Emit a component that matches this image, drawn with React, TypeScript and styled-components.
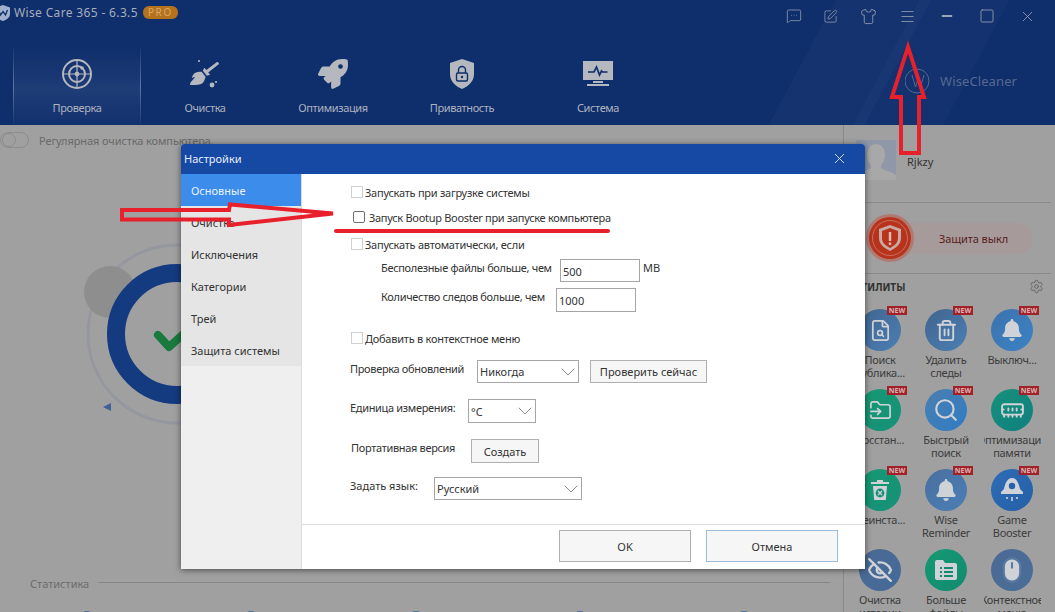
import React from 'react';
import styled, { createGlobalStyle } from 'styled-components';
import { FaBroom, FaRocket, FaBell } from 'react-icons/fa';
import {
  ChevronDown,
  EyeOff,
  FileSearch,
  MemoryStick,
  MessageSquareMore,
  Menu,
  Minus,
  Mouse,
  Search,
  Settings,
  Shirt,
  Square,
  SquarePen,
  Trash2,
  X,
  FolderInput,
} from 'lucide-react';

const GlobalStyle = createGlobalStyle`
  html, body { margin: 0; padding: 0; }
  body {
    width: 1055px;
    height: 612px;
    overflow: hidden;
    background: #a0a0a0;
    font-family: "Noto Sans", "Liberation Sans", sans-serif;
    font-size: 11px;
    color: #333;
  }
`;

const Page = styled.div`
  position: relative;
  width: 1055px;
  height: 612px;
  overflow: hidden;
  display: flex;
  flex-direction: column;
`;

/* ---------- шапка ---------- */

const Header = styled.header`
  flex: 0 0 125px;
  display: flex;
  flex-direction: column;
  background:
    linear-gradient(118deg, transparent 74.5%, rgba(255, 255, 255, 0.025) 74.5%, rgba(255, 255, 255, 0.025) 83%, transparent 83%),
    linear-gradient(118deg, transparent 82%, rgba(255, 255, 255, 0.02) 82%, rgba(255, 255, 255, 0.02) 90%, transparent 90%),
    #0e2e6c;
`;

const TitleBar = styled.div`
  flex: 0 0 47px;
  display: flex;
  align-items: flex-start;
  padding-top: 4px;
  box-sizing: border-box;
`;

const AppLogo = styled.svg`
  width: 14px;
  height: 16px;
  margin: 1px 1px 0 -4px;
  flex: none;
`;

const AppTitle = styled.span`
  font-size: 12px;
  line-height: 17px;
  letter-spacing: 0.35px;
  color: #a7adba;
  margin-left: 3px;
`;

const ProBadge = styled.span`
  width: 35px;
  height: 13px;
  margin: 2px 0 0 5px;
  border-radius: 6px;
  background: #b5721c;
  color: #d8a865;
  font-size: 10px;
  line-height: 13px;
  letter-spacing: 1.6px;
  text-align: center;
`;

const WindowTools = styled.div`
  margin-left: auto;
  margin-right: 8px;
  margin-top: 2px;
  display: flex;
  color: #a2a8b8;
`;

const ToolSlot = styled.div<{ $w: number }>`
  width: ${p => p.$w}px;
  height: 20px;
  display: flex;
  align-items: center;
  justify-content: center;
`;

const Tabs = styled.nav`
  flex: 1;
  display: flex;
  padding-left: 13px;
  position: relative;
`;

const Tab = styled.div<{ $w: number; $active?: boolean }>`
  width: ${p => p.$w}px;
  box-sizing: border-box;
  display: flex;
  flex-direction: column;
  align-items: center;
  color: #b5b8bf;
  padding-top: 12px;
  ${p =>
    p.$active &&
    `
    background: linear-gradient(180deg, rgba(255,255,255,0) 0%, rgba(255,255,255,0.07) 55%, rgba(255,255,255,0.01) 100%);
    border-left: 1px solid;
    border-right: 1px solid;
    border-image: linear-gradient(180deg, rgba(255,255,255,0.02), rgba(255,255,255,0.3) 50%, rgba(255,255,255,0.02)) 1;
  `}
`;

const TabIcon = styled.div`
  height: 30px;
  display: flex;
  align-items: center;
  justify-content: center;
`;

const TabLabel = styled.span`
  margin-top: 11px;
  font-size: 11px;
  line-height: 15px;
  letter-spacing: -0.4px;
  color: #aeb3bf;
`;

const Brand = styled.div`
  position: absolute;
  left: 905px;
  top: 21px;
  display: flex;
  align-items: center;
  gap: 9px;
  color: #56698f;
  font-size: 13px;
  letter-spacing: 0.1px;
`;

/* ---------- основная часть ---------- */

const Body = styled.div`
  flex: 1;
  display: flex;
  min-height: 0;
`;

const Main = styled.main`
  flex: 0 0 843px;
  display: flex;
  flex-direction: column;
`;

const ScheduleRow = styled.div`
  flex: none;
  height: 30px;
  display: flex;
  align-items: center;
  gap: 10px;
  color: #696969;
  font-size: 11px;
  letter-spacing: -0.1px;
`;

const Toggle = styled.div`
  width: 29px;
  height: 16px;
  box-sizing: border-box;
  border: 1px solid #8d8d8d;
  border-radius: 8px;
  display: flex;
  align-items: center;
  padding-left: 1px;
  &::before {
    content: '';
    width: 12px;
    height: 12px;
    border: 1px solid #8d8d8d;
    border-radius: 50%;
  }
`;

const Gauge = styled.svg`
  width: 200px;
  height: 192px;
  margin: 85px 0 0 77px;
  flex: none;
`;

const StatsHeader = styled.div`
  flex: none;
  margin-top: 144px;
  display: flex;
  align-items: center;
  gap: 9px;
  padding: 0 13px 0 30px;
  color: #6c6c6c;
  font-size: 11px;
  &::after {
    content: '';
    flex: 1;
    height: 1px;
    background: #878787;
    margin-top: -2px;
  }
`;

const StatsIcons = styled.div`
  flex: none;
  margin-top: 20px;
  display: flex;
  justify-content: space-between;
  padding: 0 95px 0 83px;
`;

const StatIcon = styled.div`
  width: 8px;
  height: 8px;
  border-radius: 3px 3px 0 0;
  background: #4b6fa0;
`;

const Side = styled.aside`
  flex: 1;
  border-left: 1px solid #8a8a8a;
  padding: 0 4px 0 0;
  display: flex;
  flex-direction: column;
`;

const UserBlock = styled.div`
  flex: none;
  height: 78px;
  box-sizing: border-box;
  display: flex;
  padding: 15px 0 0 12px;
  border-bottom: 1px solid #8a8a8a;
`;

const Avatar = styled.svg`
  width: 40px;
  height: 40px;
  flex: none;
`;

const UserName = styled.span`
  margin: 14px 0 0 11px;
  font-size: 11px;
  line-height: 15px;
  color: #333;
`;

const ProtectBlock = styled.div`
  flex: none;
  height: 71px;
  box-sizing: border-box;
  border-bottom: 1px solid #8a8a8a;
  display: flex;
  align-items: center;
  padding-left: 24px;
`;

const ProtectPill = styled.div`
  position: relative;
  width: 165px;
  height: 31px;
  border-radius: 16px;
  background: #a69b9a;
  color: #5a1c1c;
  font-size: 11px;
  letter-spacing: -0.1px;
  line-height: 31px;
  padding-left: 71px;
  box-sizing: border-box;
`;

const ProtectBadge = styled.svg`
  position: absolute;
  left: -2px;
  top: -9px;
  width: 48px;
  height: 48px;
`;

const UtilHead = styled.div`
  flex: none;
  height: 35px;
  display: flex;
  align-items: center;
  justify-content: space-between;
  padding: 0 7px 10px 11px;
  box-sizing: border-box;
  font-size: 10px;
  font-weight: 700;
  color: #333;
  text-transform: uppercase;
`;

const ToolGrid = styled.div`
  flex: none;
  display: grid;
  grid-template-columns: repeat(3, 66px);
  grid-auto-rows: 80px;
  padding-left: 3px;
`;

const ToolCell = styled.div`
  position: relative;
  display: flex;
  flex-direction: column;
  align-items: center;
`;

const ToolCircle = styled.div<{ $c1: string; $c2: string }>`
  width: 42px;
  height: 42px;
  border-radius: 50%;
  background: linear-gradient(135deg, ${p => p.$c1}, ${p => p.$c2});
  color: #cfd3d8;
  display: flex;
  align-items: center;
  justify-content: center;
  margin-bottom: 2px;
`;

const NewBadge = styled.span`
  position: absolute;
  left: 40px;
  top: -3px;
  width: 20px;
  height: 9px;
  background: #a12128;
  color: #d9b4b4;
  font-size: 7px;
  font-weight: 700;
  line-height: 9px;
  text-align: center;
`;

const ToolLine = styled.div`
  width: 57px;
  height: 13px;
  display: flex;
  justify-content: center;
  overflow: hidden;
  white-space: nowrap;
  font-size: 11px;
  letter-spacing: -0.3px;
  line-height: 13px;
  color: #3c3c3c;
`;

/* ---------- диалог настроек ---------- */

const Dialog = styled.section`
  position: absolute;
  left: 181px;
  top: 144px;
  width: 684px;
  height: 425px;
  display: flex;
  flex-direction: column;
  background: #fff;
  border-radius: 3px 3px 0 0;
  box-shadow: 0 1px 6px rgba(0, 0, 0, 0.55);
`;

const DialogTitle = styled.div`
  flex: 0 0 30px;
  box-sizing: border-box;
  display: flex;
  align-items: center;
  justify-content: space-between;
  padding: 0 17px 1px 3px;
  background: #1649a3;
  border-radius: 3px 3px 0 0;
  color: #e8eefa;
  font-size: 11px;
`;

const DialogBody = styled.div`
  flex: 1;
  display: flex;
  min-height: 0;
`;

const SideMenu = styled.ul`
  flex: 0 0 120px;
  margin: 0;
  padding: 0;
  list-style: none;
  background: #efefef;
  border-right: 1px solid #dcdcdc;
`;

const MenuItem = styled.li<{ $active?: boolean }>`
  height: 32px;
  box-sizing: border-box;
  padding-left: 10px;
  line-height: 33px;
  font-size: 11px;
  background: ${p => (p.$active ? '#3b8ceb' : '#e5e5e5')};
  color: ${p => (p.$active ? '#eaf3fd' : '#333')};
`;

const Pane = styled.div`
  flex: 1;
  display: flex;
  flex-direction: column;
  min-width: 0;
`;

const Form = styled.div`
  flex: 1;
  display: flex;
  flex-direction: column;
`;

const Row = styled.div<{ $top: number; $left: number; $h: number }>`
  flex: none;
  margin-top: ${p => p.$top}px;
  margin-left: ${p => p.$left}px;
  height: ${p => p.$h}px;
  display: flex;
  align-items: center;
  font-size: 11px;
  color: #333;
  white-space: nowrap;
`;

const CheckBox = styled.span<{ $focus?: boolean }>`
  width: 12px;
  height: 12px;
  box-sizing: border-box;
  flex: none;
  border: 1px solid ${p => (p.$focus ? '#6f6f6f' : '#d0d0d0')};
  border-radius: ${p => (p.$focus ? '2px' : '0')};
  margin-right: ${p => (p.$focus ? '4px' : '2px')};
`;

const CheckLabel = styled.span<{ $tight?: boolean }>`
  letter-spacing: ${p => (p.$tight ? '-0.3px' : '-0.25px')};
`;

const FieldLabel = styled.span<{ $w: number; $plain?: boolean }>`
  width: ${p => p.$w}px;
  flex: none;
  padding-bottom: 7px;
  letter-spacing: ${p => (p.$plain ? '0' : '-0.33px')};
`;

const NumberField = styled.div`
  width: 80px;
  height: 100%;
  box-sizing: border-box;
  border: 1px solid #a6a6a6;
  padding: 3px 0 0 2px;
  line-height: 18px;
`;

const Unit = styled.span`
  margin-left: 3px;
  padding-bottom: 7px;
`;

const Select = styled.div<{ $w: number }>`
  width: ${p => p.$w}px;
  height: 100%;
  box-sizing: border-box;
  border: 1px solid #a6a6a6;
  padding: 0 0 0 2px;
  display: flex;
  align-items: center;
  justify-content: space-between;
  color: #333;
`;

const Chevron = styled(ChevronDown)`
  color: #8b8b8b;
  flex: none;
  margin-right: -2px;
`;

const SmallButton = styled.button<{ $w: number }>`
  width: ${p => p.$w}px;
  height: 100%;
  margin-left: 11px;
  padding: 0;
  border: 1px solid #b0b0b0;
  background: #f6f6f6;
  font: inherit;
  color: #333;
`;

const BareButton = styled(SmallButton)`
  margin-left: 0;
`;

const Footer = styled.div`
  flex: 0 0 45px;
  box-sizing: border-box;
  border-top: 1px solid #dedede;
  display: flex;
  gap: 15px;
  padding: 5px 0 0 257px;
`;

const FooterButton = styled.button<{ $accent?: boolean }>`
  width: 132px;
  height: 32px;
  padding: 0;
  border: 1px solid ${p => (p.$accent ? '#9bbbdc' : '#b0b0b0')};
  background: #f6f6f6;
  font: inherit;
  font-size: 11px;
  color: #333;
`;

/* красные пометки поверх скриншота */
const Annotations = styled.svg`
  position: absolute;
  left: 0;
  top: 0;
  width: 1055px;
  height: 612px;
  pointer-events: none;
`;

const tools = [
  { lines: ['Поиск', 'дублика...'], c1: '#41648f', c2: '#4b7fb3', icon: <FileSearch size={23} strokeWidth={1.8} />, isNew: true },
  { lines: ['Удалить', 'следы'], c1: '#41648f', c2: '#4b7fb3', icon: <Trash2 size={23} strokeWidth={2} />, isNew: true },
  { lines: ['Выключ...'], c1: '#3d73ad', c2: '#3a82c4', icon: <FaBell size={22} />, isNew: true },
  { lines: ['Восстан...'], c1: '#169a72', c2: '#169078', icon: <FolderInput size={23} strokeWidth={1.8} />, isNew: true },
  { lines: ['Быстрый', 'поиск'], c1: '#4b7fb0', c2: '#2f7cc4', icon: <Search size={26} strokeWidth={2} />, isNew: true },
  { lines: ['Оптимизация', 'памяти'], c1: '#16917a', c2: '#0f7f80', icon: <MemoryStick size={25} strokeWidth={1.8} />, isNew: true },
  {
    lines: ['Деинста...'],
    c1: '#169a72',
    c2: '#169078',
    icon: (
      <svg width="22" height="24" viewBox="0 0 22 24">
        <path d="M8 2h6v2h6v2H2V4h6z" fill="currentColor" />
        <path d="M4 8h14l-1.2 14H5.2z" fill="currentColor" />
        <circle cx="11" cy="15" r="4.4" fill="#169078" />
        <path d="M9 13l4 4M13 13l-4 4" stroke="currentColor" strokeWidth="1.4" />
      </svg>
    ),
    isNew: true,
  },
  { lines: ['Wise', 'Reminder'], c1: '#4a6f9f', c2: '#4a7fb5', icon: <FaBell size={22} />, isNew: true },
  {
    lines: ['Game', 'Booster'],
    c1: '#2d6cb5',
    c2: '#2560a8',
    icon: (
      <svg width="26" height="26" viewBox="0 0 26 26">
        <path d="M13 1c5 0 7 6 8 11l3 3v2H2v-2l3-3c1-5 3-11 8-11z" fill="currentColor" />
        <circle cx="13" cy="9" r="3.2" fill="#2560a8" />
        <path d="M13 20v4M8 20v2M18 20v2" stroke="currentColor" strokeWidth="1.6" />
      </svg>
    ),
    isNew: true,
  },
  { lines: ['Очистка', 'истории'], c1: '#4a6a94', c2: '#456a98', icon: <EyeOff size={26} strokeWidth={2.2} /> },
  {
    lines: ['Больше', 'файлы'],
    c1: '#149a72',
    c2: '#138a70',
    icon: (
      <svg width="22" height="20" viewBox="0 0 22 20">
        <path d="M0 2a2 2 0 0 1 2-2h6l2 3h10a2 2 0 0 1 2 2v13a2 2 0 0 1-2 2H2a2 2 0 0 1-2-2z" fill="currentColor" />
        <path d="M5 8h2M9 8h9M5 12h2M9 12h9M5 16h2M9 16h9" stroke="#138a70" strokeWidth="1.8" />
      </svg>
    ),
  },
  { lines: ['Контекстное', 'меню'], c1: '#4a6a94', c2: '#4a6d98', icon: <Mouse size={28} strokeWidth={1.8} fill="#cfd3d8" stroke="#5a7aa2" /> },
];

const tabs = [
  {
    w: 128,
    label: 'Проверка',
    active: true,
    icon: (
      <svg width="32" height="32" viewBox="0 0 32 32" fill="none" stroke="currentColor">
        <circle cx="16" cy="16" r="14" strokeWidth="2" />
        <circle cx="16" cy="16" r="8" strokeWidth="2" />
        <path d="M16 2v28M2 16h28" strokeWidth="1.2" />
        <circle cx="16" cy="16" r="2" fill="currentColor" />
        <circle cx="21" cy="10" r="1.8" fill="currentColor" stroke="none" />
      </svg>
    ),
  },
  {
    w: 128,
    label: 'Очистка',
    icon: (
      <svg width="32" height="32" viewBox="0 0 32 32" fill="currentColor">
        <g transform="translate(1 1)">
          <FaBroom size={29} />
        </g>
        <circle cx="23" cy="27" r="2.4" />
        <circle cx="27" cy="24" r="1.1" />
        <circle cx="10" cy="3" r="1.1" />
      </svg>
    ),
  },
  { w: 128, label: 'Оптимизация', icon: <FaRocket size={30} /> },
  {
    w: 130,
    label: 'Приватность',
    icon: (
      <svg width="26" height="30" viewBox="0 0 26 30">
        <path d="M13 0l12 4v11c0 7-5 12-12 15C6 27 1 22 1 15V4z" fill="currentColor" />
        <rect x="7.5" y="14" width="11" height="8" rx="1.5" fill="none" stroke="#0e2e6c" strokeWidth="1.4" />
        <path d="M9.5 14v-3a3.5 3.5 0 0 1 7 0v3" fill="none" stroke="#0e2e6c" strokeWidth="1.4" />
        <circle cx="13" cy="18" r="1.2" fill="#0e2e6c" />
      </svg>
    ),
  },
  {
    w: 142,
    label: 'Система',
    icon: (
      <svg width="30" height="26" viewBox="0 0 30 26">
        <rect x="0" y="0" width="30" height="19" fill="currentColor" />
        <path d="M5 11h6l2.5-5 3 8 2-4 1 1h5" fill="none" stroke="#0e2e6c" strokeWidth="1.7" />
        <rect x="4" y="23" width="22" height="2" fill="currentColor" />
        <rect x="10" y="20" width="10" height="2" fill="currentColor" />
      </svg>
    ),
  },
];

const menu = ['Основные', 'Очистка', 'Исключения', 'Категории', 'Трей', 'Защита системы'];

export default function App() {
  return (
    <Page>
      <GlobalStyle />
      <Header>
        <TitleBar>
          <AppLogo viewBox="0 0 14 16">
            <path d="M7 0l7 2.5V9c0 3.5-3 5.5-7 7-4-1.5-7-3.5-7-7V2.5z" fill="#9fb1cc" />
            <path d="M2.5 5l2 5 2.5-3.500L9.500 10l2-5" fill="none" stroke="#0e2e6c" strokeWidth="1.3" />
          </AppLogo>
          <AppTitle>Wise Care 365 - 6.3.5</AppTitle>
          <ProBadge>PRO</ProBadge>
          <WindowTools>
            <ToolSlot $w={37}><MessageSquareMore size={16} strokeWidth={1.1} /></ToolSlot>
            <ToolSlot $w={37}><SquarePen size={15} strokeWidth={1.1} /></ToolSlot>
            <ToolSlot $w={38}><Shirt size={17} strokeWidth={1.1} /></ToolSlot>
            <ToolSlot $w={40}><Menu size={17} strokeWidth={1.1} /></ToolSlot>
            <ToolSlot $w={40}><Minus size={16} strokeWidth={2} color="#c9ccd3" /></ToolSlot>
            <ToolSlot $w={40}><Square size={16} strokeWidth={1.2} /></ToolSlot>
            <ToolSlot $w={40}><X size={17} strokeWidth={1.1} /></ToolSlot>
          </WindowTools>
        </TitleBar>
        <Tabs>
          {tabs.map(t => (
            <Tab key={t.label} $w={t.w} $active={t.active}>
              <TabIcon>{t.icon}</TabIcon>
              <TabLabel>{t.label}</TabLabel>
            </Tab>
          ))}
          <Brand>
            <svg width="26" height="26" viewBox="0 0 26 26" fill="none" stroke="#56698f" strokeWidth="1">
              <circle cx="12" cy="13" r="12" />
              <path d="M7 7l3.5 12L13 11l2.5 8L19 7" />
            </svg>
            WiseCleaner
          </Brand>
        </Tabs>
      </Header>

      <Body>
        <Main>
          <ScheduleRow>
            <Toggle />
            Регулярная очистка компьютера.
          </ScheduleRow>
          <Gauge viewBox="0 0 200 192">
            <circle cx="100" cy="94" r="89" fill="none" stroke="#95979f" strokeWidth="3" />
            <circle cx="33" cy="52" r="26" fill="#8e8e8e" />
            <circle cx="100" cy="94" r="61" fill="none" stroke="#143a80" strokeWidth="18" />
            <path d="M81 95l11 12 20-18" fill="none" stroke="#187a3c" strokeWidth="8" strokeLinecap="round" strokeLinejoin="round" />
            <path d="M26 167l8-4v8z" fill="#41609a" />
          </Gauge>
          <StatsHeader>Статистика</StatsHeader>
          <StatsIcons>
            {[0, 1, 2, 3, 4].map(i => (
              <StatIcon key={i} />
            ))}
          </StatsIcons>
        </Main>

        <Side>
          <UserBlock>
            <Avatar viewBox="0 0 40 40">
              <rect width="40" height="40" fill="#8f97a8" />
              <path d="M20 4c6 0 9 5 9 11 0 4-2 8-4 10v3c4 3 10 3 15 7v5H0v-5c5-4 11-4 15-7v-3c-2-2-4-6-4-10 0-6 3-11 9-11z" fill="#a8a8a8" />
            </Avatar>
            <UserName>Rjkzy</UserName>
          </UserBlock>
          <ProtectBlock>
            <ProtectPill>
              <ProtectBadge viewBox="0 0 48 48">
                <circle cx="24" cy="24" r="24" fill="#b07a72" />
                <circle cx="24" cy="24" r="21" fill="#b8331c" />
                <circle cx="24" cy="24" r="17.5" fill="none" stroke="#cf8a7c" strokeWidth="0.7" />
                <path d="M24 11l11 4v9c0 6-5 10-11 13-6-3-11-7-11-13v-9z" fill="#c9a9a1" />
                <path d="M24 14l8 3v7c0 5-3.500 7.500-8 10-4.500-2.500-8-5-8-10v-7z" fill="#b8331c" />
                <rect x="22.8" y="18" width="2.400" height="9" fill="#d9bdb6" />
                <rect x="22.800" y="28.500" width="2.400" height="2.400" fill="#d9bdb6" />
              </ProtectBadge>
              Защита выкл
            </ProtectPill>
          </ProtectBlock>
          <UtilHead>
            Утилиты
            <Settings size={15} strokeWidth={1.2} color="#555" />
          </UtilHead>
          <ToolGrid>
            {tools.map(t => (
              <ToolCell key={t.lines.join(' ')}>
                <ToolCircle $c1={t.c1} $c2={t.c2}>{t.icon}</ToolCircle>
                {t.isNew && <NewBadge>NEW</NewBadge>}
                {t.lines.map(l => (
                  <ToolLine key={l}>{l}</ToolLine>
                ))}
              </ToolCell>
            ))}
          </ToolGrid>
        </Side>
      </Body>

      <Dialog>
        <DialogTitle>
          Настройки
          <X size={17} strokeWidth={1.2} color="#e8eefa" />
        </DialogTitle>
        <DialogBody>
          <SideMenu>
            {menu.map((m, i) => (
              <MenuItem key={m} $active={i === 0}>{m}</MenuItem>
            ))}
          </SideMenu>
          <Pane>
            <Form>
              <Row $top={12} $left={49} $h={12}><CheckBox /><CheckLabel>Запускать при загрузке системы</CheckLabel></Row>
              <Row $top={13} $left={51} $h={12}><CheckBox $focus /><CheckLabel $tight>Запуск Bootup Booster при запуске компьютера</CheckLabel></Row>
              <Row $top={15} $left={49} $h={12}><CheckBox /><CheckLabel>Запускать автоматически, если</CheckLabel></Row>
              <Row $top={9} $left={79} $h={23}>
                <FieldLabel $w={179}>Бесполезные файлы больше, чем</FieldLabel>
                <NumberField>500</NumberField>
                <Unit>MB</Unit>
              </Row>
              <Row $top={6} $left={79} $h={24}>
                <FieldLabel $w={175}>Количество следов больше, чем</FieldLabel>
                <NumberField>1000</NumberField>
              </Row>
              <Row $top={20} $left={49} $h={12}><CheckBox /><CheckLabel>Добавить в контекстное меню</CheckLabel></Row>
              <Row $top={16} $left={48} $h={23}>
                <FieldLabel $w={127}>Проверка обновлений</FieldLabel>
                <Select $w={102}>Никогда<Chevron size={24} strokeWidth={1} /></Select>
                <SmallButton $w={117}>Проверить сейчас</SmallButton>
              </Row>
              <Row $top={16} $left={48} $h={24}>
                <FieldLabel $w={118}>Единица измерения:</FieldLabel>
                <Select $w={68}>°C<Chevron size={24} strokeWidth={1} /></Select>
              </Row>
              <Row $top={16} $left={49} $h={24}>
                <FieldLabel $w={120}>Портативная версия</FieldLabel>
                <BareButton $w={68}>Создать</BareButton>
              </Row>
              <Row $top={14} $left={48} $h={23}>
                <FieldLabel $w={84} $plain>Задать язык:</FieldLabel>
                <Select $w={148}>Русский<Chevron size={24} strokeWidth={1} /></Select>
              </Row>
            </Form>
            <Footer>
              <FooterButton>OK</FooterButton>
              <FooterButton $accent>Отмена</FooterButton>
            </Footer>
          </Pane>
        </DialogBody>
      </Dialog>

      <Annotations viewBox="0 0 1055 612" fill="none" stroke="#e8202c" strokeLinejoin="miter">
        <path d="M122 210H229L230 204.500L333 213.500L229 225V219.500H122Z" strokeWidth="4" />
        <path d="M336 231H608" strokeWidth="4" strokeLinecap="round" />
        <path d="M908 47L892 97H901V153H919V97H924Z" strokeWidth="4" />
      </Annotations>
    </Page>
  );
}
